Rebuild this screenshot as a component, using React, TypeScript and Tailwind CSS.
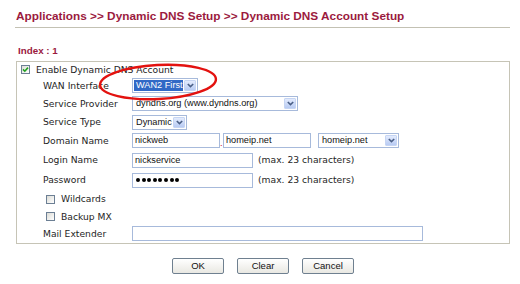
import React from 'react';

// form field helpers, XP-ish look scaled down
const Chevron = () => (
  <svg width="7" height="5" viewBox="0 0 7 5">
    <polyline points="0.8,1 3.5,3.6 6.2,1" fill="none" stroke="#4a5f86" strokeWidth="1.6" />
  </svg>
);

function Select({ value, className, highlighted }: { value: string; className: string; highlighted?: boolean }) {
  return (
    <div className={`flex h-[15px] items-stretch border border-[#a7badb] bg-white ${className}`}>
      <div className="flex min-w-0 flex-1 items-center overflow-hidden pl-px">
        <span
          className={`whitespace-nowrap pl-[2px] pr-[1px] font-['Liberation_Sans',Arial,sans-serif] text-[9.2px] leading-[11px] ${
            highlighted ? 'bg-[#3169c6] text-white' : 'text-[#111]'
          }`}
        >
          {value}
        </span>
      </div>
      <div className="m-px flex w-[12px] shrink-0 items-center justify-center rounded-[1px] border border-[#c6d5f3] bg-linear-to-b from-[#e3ebfd] to-[#b8cbf3]">
        <Chevron />
      </div>
    </div>
  );
}

function Input({ value, className, password }: { value?: string; className: string; password?: boolean }) {
  return (
    <div className={`flex h-[15px] items-center border border-[#a7badb] bg-white pl-[2px] ${className}`}>
      {password ? (
        <div className="flex gap-[1.6px] pl-px">
          {Array.from({ length: 8 }).map((_, i) => (
            <div key={i} className="h-[4px] w-[4px] rounded-full bg-black" />
          ))}
        </div>
      ) : (
        <span className="whitespace-nowrap font-['Liberation_Sans',Arial,sans-serif] text-[9.2px] leading-[11px] text-[#111]">{value}</span>
      )}
    </div>
  );
}

function Checkbox({ checked }: { checked?: boolean }) {
  return (
    <div className="flex h-[9px] w-[9px] items-center justify-center border border-[#6c7f94] bg-linear-to-br from-[#dcdcd6] to-white">
      {checked && (
        <svg width="7" height="7" viewBox="0 0 7 7">
          <polyline points="1,3.4 2.8,5.2 6,1.6" fill="none" stroke="#21a121" strokeWidth="1.6" />
        </svg>
      )}
    </div>
  );
}

function Row({ label, h, children }: { label: string; h: string; children?: React.ReactNode }) {
  return (
    <div className={`flex items-center ${h}`}>
      <div className="w-[115px] pl-[26px]">{label}</div>
      <div className="flex items-center">{children}</div>
    </div>
  );
}

const Note = ({ text }: { text: string }) => <span className="ml-[5px]">{text}</span>;

function Button({ label }: { label: string }) {
  return (
    <div className="flex h-[16px] w-[52px] items-center justify-center rounded-[2px] border border-[#6f8090] bg-linear-to-b from-white to-[#e9e8e2] font-['Liberation_Sans',Arial,sans-serif] text-[9.5px] text-[#111]">
      {label}
    </div>
  );
}

export default function App() {
  return (
    <div className="relative h-[284px] w-[520px] overflow-hidden bg-white font-['DejaVu_Sans',Verdana,sans-serif] text-[9.2px] text-[#1e1e1e]">
      <div className="pl-[16px] pt-[9px] font-['Liberation_Sans',Arial,sans-serif] text-[11.8px] font-bold leading-[14px] text-[#9b1a3e]">
        Applications &gt;&gt; Dynamic DNS Setup &gt;&gt; Dynamic DNS Account Setup
      </div>
      <div className="ml-[15px] mt-[4px] h-px w-[495px] bg-[#c3c1b3]" />

      <div className="mt-[17px] pl-[18px] font-['Liberation_Sans',Arial,sans-serif] text-[9.8px] font-bold leading-[12px] text-[#9b1a3e]">
        Index : 1
      </div>

      <div className="ml-[16px] mt-[4px] w-[494px] border border-[#c6c4b6] pb-px">
        <div className="flex h-[15px] items-center pl-[4px]">
          <Checkbox checked />
          <span className="ml-[6px]">Enable Dynamic DNS Account</span>
        </div>
        <Row label="WAN Interface" h="h-[17px]">
          <Select value="WAN2 First" className="w-[66px]" highlighted />
        </Row>
        <Row label="Service Provider" h="h-[19px]">
          <Select value="dyndns.org (www.dyndns.org)" className="w-[166px]" />
        </Row>
        <Row label="Service Type" h="h-[18px]">
          <Select value="Dynamic" className="w-[55px]" />
        </Row>
        <Row label="Domain Name" h="h-[19px]">
          <Input value="nickweb" className="w-[88px]" />
          <span className="w-[3px] self-end font-['Liberation_Sans',Arial,sans-serif] leading-[10px] text-[#d0102a]">.</span>
          <Input value="homeip.net" className="w-[88px]" />
          <Select value="homeip.net" className="ml-[7px] w-[81px]" />
        </Row>
        <Row label="Login Name" h="h-[20px]">
          <Input value="nickservice" className="w-[121px]" />
          <Note text="(max. 23 characters)" />
        </Row>
        <Row label="Password" h="h-[20px]">
          <Input password className="w-[121px]" />
          <Note text="(max. 23 characters)" />
        </Row>
        <div className="flex h-[18px] items-center pl-[29px]">
          <Checkbox />
          <span className="ml-[6px]">Wildcards</span>
        </div>
        <div className="flex h-[17px] items-center pl-[29px]">
          <Checkbox />
          <span className="ml-[6px]">Backup MX</span>
        </div>
        <Row label="Mail Extender" h="h-[17px]">
          <Input className="w-[291px]" />
        </Row>
      </div>

      <div className="ml-[16px] mt-[14px] flex w-[494px] justify-center gap-[13px]">
        <Button label="OK" />
        <Button label="Clear" />
        <Button label="Cancel" />
      </div>

      {/* hand drawn red mark round the WAN select */}
      <svg className="pointer-events-none absolute left-0 top-0" width="520" height="284">
        <ellipse cx="158" cy="82" rx="58" ry="17" transform="rotate(-3 158 82)" fill="none" stroke="#e3120f" strokeWidth="2.4" />
      </svg>
    </div>
  );
}
